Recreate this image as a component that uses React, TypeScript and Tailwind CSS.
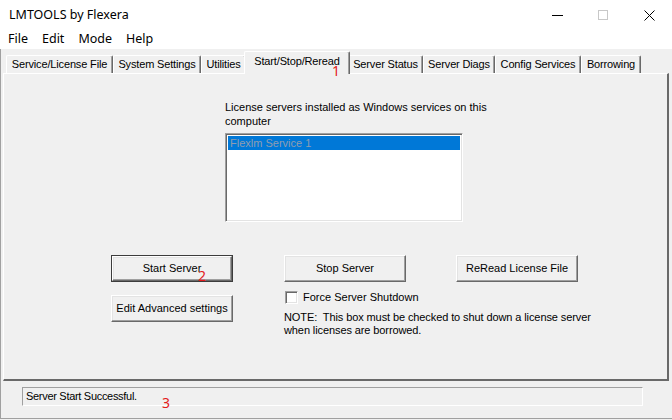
import React from 'react';
import clsx from 'clsx';

const tabs = [
  { label: 'Service/License File', w: 107 },
  { label: 'System Settings', w: 88 },
  { label: 'Utilities', w: 45 },
  { label: 'Start/Stop/Reread', w: 106, active: true },
  { label: 'Server Status', w: 75 },
  { label: 'Server Diags', w: 72 },
  { label: 'Config Services', w: 86 },
  { label: 'Borrowing', w: 60 },
];

const sans = "font-['Liberation_Sans',Arial,sans-serif]";

function WinButton({ children, isDefault }: { children: React.ReactNode; isDefault?: boolean }) {
  const face = (
    <div className="flex h-full w-full items-center justify-center border border-t-white border-l-white border-r-[#696969] border-b-[#696969] bg-[#f0f0f0] shadow-[inset_-1px_-1px_0_#a0a0a0,inset_1px_1px_0_#e3e3e3]">
      {children}
    </div>
  );
  return (
    <div
      className={clsx(
        'h-[27px] w-[122px] shrink-0 text-[11px] text-black',
        isDefault && 'border border-[#3c3c3c]'
      )}
    >
      {face}
    </div>
  );
}

function Mark({ n, className }: { n: string; className: string }) {
  return (
    <span className={clsx("pointer-events-none absolute z-20 text-[14px] leading-none text-[#e31b1b] font-['Noto_Sans',sans-serif]", className)}>
      {n}
    </span>
  );
}

export default function App() {
  return (
    <div className={clsx('relative h-[420px] w-[672px] overflow-hidden bg-[#f0f0f0]', sans)}>
      {/* title bar */}
      <div className="flex h-[30px] items-center justify-between bg-white font-['Noto_Sans',sans-serif]">
        <span className="pl-[9px] text-[12.5px] text-black">LMTOOLS by Flexera</span>
        <div className="flex h-full">
          <div className="flex w-[46px] items-center justify-center">
            <div className="h-px w-[11px] bg-black" />
          </div>
          <div className="flex w-[46px] items-center justify-center">
            <div className="h-[10px] w-[10px] border border-[#c8c8c8]" />
          </div>
          <div className="flex w-[46px] items-center justify-center">
            <svg width="11" height="11" viewBox="0 0 11 11">
              <path d="M0.5 0.5L10.5 10.5M10.5 0.5L0.5 10.5" stroke="#000" strokeWidth="1" />
            </svg>
          </div>
        </div>
      </div>

      {/* menu bar */}
      <div className="flex h-[19px] items-center bg-white pl-px font-['Noto_Sans',sans-serif] text-[12.5px] text-black">
        {['File', 'Edit', 'Mode', 'Help'].map((m) => (
          <span key={m} className="px-[7px] leading-none">
            {m}
          </span>
        ))}
      </div>

      <div className="flex h-[370px] flex-col border-l border-b border-[#a0a0a0]">
        {/* tab strip */}
        <div className="flex h-[24px] items-end pl-[5px]">
          {tabs.map((t) => (
            <div
              key={t.label}
              style={{ width: t.w }}
              className={clsx(
                'relative flex shrink-0 items-center justify-center whitespace-nowrap rounded-t-[2px] border-t border-l border-r border-t-white border-l-white border-r-[#696969] bg-[#f0f0f0] text-[11px] tracking-[-0.15px] text-black shadow-[inset_-1px_0_0_#a0a0a0]',
                t.active ? 'z-10 -mx-[2px] mb-[-1px] h-[23px] pb-[3px]' : 'h-[18px]'
              )}
            >
              {t.label}
            </div>
          ))}
        </div>

        {/* tab page */}
        <div className="ml-[2px] mr-[3px] h-[308px] border-t border-l border-t-white border-l-white border-r-2 border-b-2 border-r-[#696969] border-b-[#696969]">
          <div className="pl-[221px] pt-[26px]">
            <p className="text-[11px] leading-[14px] text-black">
              License servers installed as Windows services on this
              <br />
              computer
            </p>
            <div className="mt-[5px] h-[89px] w-[238px] border border-t-[#a0a0a0] border-l-[#a0a0a0] border-r-white border-b-white bg-white p-[2px] shadow-[inset_1px_1px_0_#696969,inset_-1px_-1px_0_#e3e3e3]">
              <div className="h-[14px] bg-[#0078d7] pl-[2px] text-[11px] leading-[14px] text-[#8f9db0]">
                Flexlm Service 1
              </div>
            </div>
          </div>

          <div className="mt-[33px] flex gap-[51px] pl-[107px]">
            <div className="flex flex-col gap-[13px]">
              <WinButton isDefault>Start Server</WinButton>
              <WinButton>Edit Advanced settings</WinButton>
            </div>
            <div className="flex w-[122px] shrink-0 flex-col">
              <WinButton>Stop Server</WinButton>
              <div className="mt-[9px] flex h-[13px] items-center gap-[5px] pl-px">
                <div className="h-[13px] w-[13px] shrink-0 border border-t-[#a0a0a0] border-l-[#a0a0a0] border-r-white border-b-white bg-white shadow-[inset_1px_1px_0_#696969,inset_-1px_-1px_0_#e3e3e3]" />
                <span className="whitespace-nowrap text-[11px] text-black">Force Server Shutdown</span>
              </div>
              <p className="mt-[7px] whitespace-pre text-[11px] leading-[13px] tracking-[-0.1px] text-black">
                {'NOTE:  This box must be checked to shut down a license server\nwhen licenses are borrowed.'}
              </p>
            </div>
            <div className="ml-[-1px]">
              <WinButton>ReRead License File</WinButton>
            </div>
          </div>
        </div>

        {/* status bar */}
        <div className="pl-[21px] pt-[6px]">
          <div className="flex h-[19px] w-[621px] items-center border border-t-[#a0a0a0] border-l-[#a0a0a0] border-r-white border-b-white pl-[3px] text-[11px] tracking-[-0.3px] text-black">
            Server Start Successful.
          </div>
        </div>
      </div>

      <Mark n="1" className="left-[332px] top-[64px]" />
      <Mark n="2" className="left-[198px] top-[269px]" />
      <Mark n="3" className="left-[162px] top-[396px]" />
    </div>
  );
}
